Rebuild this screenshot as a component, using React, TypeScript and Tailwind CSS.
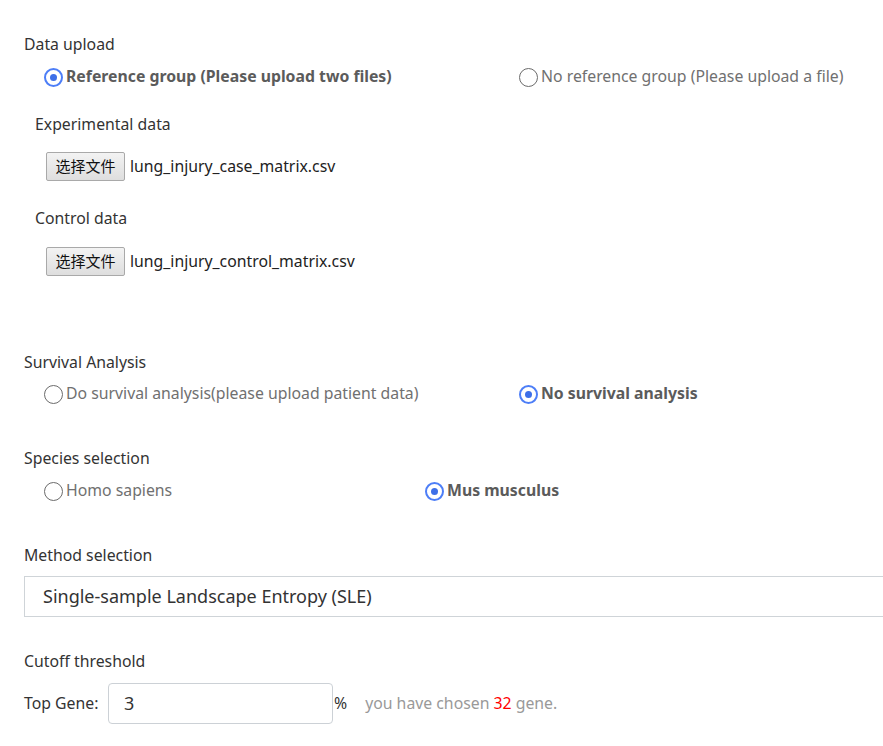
import type { ReactNode } from "react";

const FONT = { fontFamily: '"Noto Sans", "Noto Sans CJK SC", sans-serif' };

function Radio({ checked, children }: { checked?: boolean; children: ReactNode }) {
  return (
    <label className="flex items-center gap-[3px]">
      {checked ? (
        <span className="flex h-[19px] w-[19px] items-center justify-center rounded-full border-2 border-[#4d7ef7] bg-white">
          <span className="h-[7px] w-[7px] rounded-full bg-[#3d6fe8]" />
        </span>
      ) : (
        <span className="h-[19px] w-[19px] rounded-full border-[1.5px] border-[#6b6b6b] bg-white" />
      )}
      <span className={checked ? "font-bold text-[#5b5b5b]" : "text-[#707070]"}>{children}</span>
    </label>
  );
}

function FileInput({ name }: { name: string }) {
  return (
    <div className="flex items-center gap-[5px] pl-[22px]">
      <button className="h-[29px] w-[79px] rounded-[2px] border border-[#a9a9a9] bg-gradient-to-b from-[#f3f3f3] to-[#dedede] text-[15px] text-[#111]">
        选择文件
      </button>
      <span className="text-[#222]">{name}</span>
    </div>
  );
}

function Section({ title, children }: { title: string; children: ReactNode }) {
  return (
    <div>
      <div className="leading-[20px] text-[#333]">{title}</div>
      {children}
    </div>
  );
}

export default function App() {
  return (
    <div className="h-[746px] w-[883px] overflow-hidden bg-white pl-6 pt-[34px] text-[15.8px]" style={FONT}>
      <Section title="Data upload">
        <div className="mt-[13px] flex h-[20px] items-center pl-5">
          <div className="w-[475px]">
            <Radio checked>Reference group (Please upload two files)</Radio>
          </div>
          <Radio>No reference group (Please upload a file)</Radio>
        </div>
        <div className="mt-[27px] pl-[11px] leading-[20px] text-[#333]">Experimental data</div>
        <div className="mt-[18px]">
          <FileInput name="lung_injury_case_matrix.csv" />
        </div>
        <div className="mt-[27px] pl-[11px] leading-[20px] text-[#333]">Control data</div>
        <div className="mt-[19px]">
          <FileInput name="lung_injury_control_matrix.csv" />
        </div>
      </Section>

      <div className="mt-[76px]">
        <Section title="Survival Analysis">
          <div className="mt-[12px] flex h-[20px] items-center pl-5">
            <div className="w-[475px]">
              <Radio>Do survival analysis(please upload patient data)</Radio>
            </div>
            <Radio checked>No survival analysis</Radio>
          </div>
        </Section>
      </div>

      <div className="mt-[44px]">
        <Section title="Species selection">
          <div className="mt-[13px] flex h-[20px] items-center pl-5">
            <div className="w-[381px]">
              <Radio>Homo sapiens</Radio>
            </div>
            <Radio checked>Mus musculus</Radio>
          </div>
        </Section>
      </div>

      <div className="mt-[44px]">
        <Section title="Method selection">
          <div className="mt-[11px] flex h-[41px] w-[880px] items-center border border-[#cfd4d8] pl-[18px] text-[18px] text-[#333]">
            Single-sample Landscape Entropy (SLE)
          </div>
        </Section>
      </div>

      <div className="mt-[34px]">
        <Section title="Cutoff threshold">
          <div className="mt-[12px] flex items-center">
            <span className="w-[84px] text-[#333]">Top Gene:</span>
            <div className="flex h-[41px] w-[225px] items-center rounded-[4px] border border-[#ccd1d6] pl-[15px] text-[18px] text-[#333]">
              3
            </div>
            <span className="ml-[1px] text-[#333]">%</span>
            <span className="ml-[18px] text-[#999]">
              you have chosen <span className="text-[#ff0000]">32</span> gene.
            </span>
          </div>
        </Section>
      </div>
    </div>
  );
}
